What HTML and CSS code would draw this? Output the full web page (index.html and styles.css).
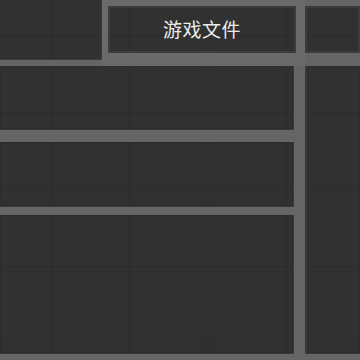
FILE: index.html
```html
<!DOCTYPE html>
<html lang="zh-CN">
<head>
    <meta charset="UTF-8">
    <meta name="viewport" content="width=device-width, initial-scale=1.0">
    <title>游戏文件</title>
    <link rel="stylesheet" href="styles.css">
</head>
<body>
    <div class="top-row">
        <div class="panel corner-panel"></div>
        <div class="tab-frame">
            <div class="panel tab-title">游戏文件</div>
        </div>
        <div class="tab-frame tab-right">
            <div class="panel tab-empty"></div>
        </div>
    </div>

    <div class="main-row">
        <div class="list-column">
            <div class="panel list-block block-first"></div>
            <div class="panel list-block block-second"></div>
            <div class="panel list-block block-third"></div>
        </div>
        <div class="panel side-panel"></div>
    </div>
</body>
</html>
```

FILE: styles.css
```css
html, body {
    margin: 0;
    padding: 0;
    width: 360px;
    height: 360px;
    overflow: hidden;
}

body {
    font-family: "Noto Sans CJK SC", "Noto Sans", sans-serif;
    background: #656565;
}

.panel {
    box-sizing: border-box;
    background-color: #313131;
    background-image:
        linear-gradient(90deg, rgba(0, 0, 0, 0.07) 2px, transparent 2px),
        linear-gradient(180deg, rgba(0, 0, 0, 0.07) 2px, transparent 2px);
    background-size: 78px 77px;
    background-position: 51px 35px;
    background-attachment: fixed;
    box-shadow: inset 0 0 0 1px #2c2c2c;
}

.top-row {
    display: flex;
    height: 66px;
}

.corner-panel {
    width: 102px;
    height: 60px;
    box-shadow: inset -1px -1px 0 #3a3a3a;
}

.tab-frame {
    box-sizing: border-box;
    width: 203px;
    padding: 6px 9px 13px 6px;
    background: #6a6a6a;
}

.tab-right {
    width: 55px;
    padding: 6px 0 13px 0;
    background: #656565;
}

.tab-title,
.tab-empty {
    height: 47px;
    border: 2px solid #3c3c3c;
    box-shadow: none;
}

.tab-title {
    display: flex;
    align-items: center;
    justify-content: center;
    padding-bottom: 3px;
    color: #ececec;
    font-size: 19px;
    letter-spacing: 0.5px;
}

.main-row {
    display: flex;
    height: 288px;
}

.list-column {
    display: flex;
    flex-direction: column;
    width: 294px;
    margin-right: 11px;
}

.list-block {
    border-right: 1px solid #3a3a3a;
}

.block-first {
    height: 64px;
    border-bottom: 1px solid #3a3a3a;
}

.block-second {
    height: 65px;
    margin-top: 12px;
    border-bottom: 1px solid #3a3a3a;
}

.block-third {
    flex: 1;
    margin-top: 8px;
    border-bottom: 1px solid #3a3a3a;
}

.side-panel {
    flex: 1;
    border-left: 2px solid #3a3a3a;
    border-bottom: 1px solid #3a3a3a;
}
```
